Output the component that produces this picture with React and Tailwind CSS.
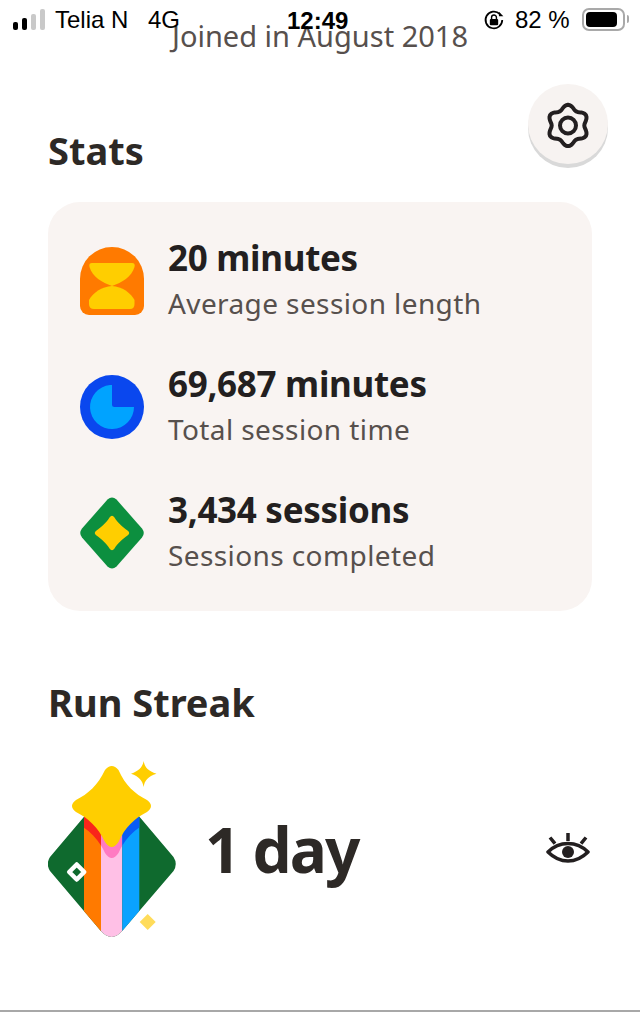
const FONT = "font-['Noto_Sans',sans-serif]";

// six lobed outline used by the settings button
function gearPath(cx, cy) {
  const pts = [];
  for (let i = 0; i < 72; i++) {
    const a = (i / 72) * Math.PI * 2;
    const r = 18.5 + 2.2 * Math.cos(6 * (a + Math.PI / 2));
    pts.push(`${(cx + r * Math.cos(a)).toFixed(2)} ${(cy + r * Math.sin(a)).toFixed(2)}`);
  }
  return `M${pts.join("L")}Z`;
}

function StatusBar() {
  return (
    <div className="absolute top-0 left-0 right-0 h-[40px] font-['Liberation_Sans',sans-serif] text-[24px] leading-[28px] text-black">
      <div className="flex items-end gap-[4px] absolute left-[13px] top-[9px] h-[21px]">
        <div className="w-[5px] h-[8px] rounded-[2px] bg-black" />
        <div className="w-[5px] h-[12px] rounded-[2px] bg-black" />
        <div className="w-[5px] h-[16px] rounded-[2px] bg-[#c9c9c9]" />
        <div className="w-[5px] h-[21px] rounded-[2px] bg-[#c9c9c9]" />
      </div>
      <span className="absolute left-[55px] top-[6px]">Telia N</span>
      <span className="absolute left-[148px] top-[6px]">4G</span>
      <span className="absolute left-[287px] top-[7px] text-[24px] font-bold">12:49</span>
      <svg className="absolute left-[483px] top-[9px]" width="22" height="22" viewBox="0 0 20 20">
        <path d="M17.5 10a7.6 7.6 0 1 1-2.2-5.4" fill="none" stroke="#000" strokeWidth="1.6" />
        <path d="M14.5 2.500v4h4z" fill="#000" />
        <rect x="6.200" y="9" width="7.600" height="5.800" rx="1" fill="#000" />
        <path d="M7.800 9V7.600a2.200 2.200 0 0 1 4.400 0V9" fill="none" stroke="#000" strokeWidth="1.300" />
      </svg>
      <span className="absolute left-[515px] top-[6px]">82 %</span>
      <div className="absolute left-[582px] top-[8px] w-[43px] h-[23px] rounded-[7px] border-2 border-[#a9a9a9] p-[2px]">
        <div className="w-[31px] h-full rounded-[4px] bg-black" />
      </div>
      <div className="absolute left-[627px] top-[15px] w-[2px] h-[8px] rounded-r-full bg-[#a9a9a9]" />
    </div>
  );
}

function HourglassIcon() {
  return (
    <svg width="64" height="68" viewBox="0 0 64 68" className="shrink-0">
      <path d="M0 32a32 32 0 0 1 64 0v27a9 9 0 0 1-9 9H9a9 9 0 0 1-9-9z" fill="#ff7a00" />
      <path d="M12 16H52Q55.500 16 54.500 20C51.500 30 42 35.500 32 39C22 35.500 12.500 30 9.500 20Q8.500 16 12 16Z" fill="#ffce00" />
      <path d="M32 39C42 39.500 51 46 54.500 53V57Q54.500 62 50 62H14Q9 62 9 57V53C12.500 46 22 39.500 32 39Z" fill="#ffce00" />
    </svg>
  );
}

function PieIcon() {
  return (
    <svg width="64" height="64" viewBox="0 0 64 64" className="shrink-0">
      <circle cx="32" cy="32" r="32" fill="#0a47ee" />
      <path d="M32 10V29.500Q32 32 34.500 32H54A22 22 0 1 1 30 10.100Z" fill="#00a3ff" />
    </svg>
  );
}

function DiamondIcon() {
  return (
    <svg width="64" height="72" viewBox="0 0 64 72" className="shrink-0">
      <path d="M27.500 2.500Q32-1.500 36.500 2.500L62 31.500Q65.500 36 62 40.500L36.500 69.500Q32 73.500 27.500 69.500L2 40.500Q-1.500 36 2 31.500Z" fill="#0c8f3f" />
      <path d="M29.500 20.500Q32 17 34.500 20.500C37 25 43 30.500 47.500 33.500Q51 36 47.500 38.500C43 41.500 37 47 34.500 51.500Q32 55 29.500 51.500C27 47 21 41.500 16.500 38.500Q13 36 16.500 33.500C21 30.500 27 25 29.500 20.500Z" fill="#ffce00" />
    </svg>
  );
}

const STAR =
  "M58 9Q64.700 1 71.500 9C78 24 88 33 100 39Q108 45 100 51C88 57 78 66 71.500 81Q64.700 91 58 81C51 66 41 57 29 51Q21 45 29 39C41 33 51 24 58 9Z";

function StreakBadge() {
  return (
    <svg width="130" height="182" viewBox="1 0 130 182" className="shrink-0">
      <defs>
        <clipPath id="badgeBody">
          <path d="M58 31Q64.700 23 71.500 31L126.500 96Q131 103 126.500 110L76 169Q64.700 183 53 169L3 110Q-1.500 103 3 96Z" />
        </clipPath>
        <clipPath id="stripeOrange"><rect x="37" y="0" width="17" height="182" /></clipPath>
        <clipPath id="stripePink"><rect x="54" y="0" width="21.300" height="182" /></clipPath>
        <clipPath id="stripeBlue"><rect x="75.300" y="0" width="17" height="182" /></clipPath>
      </defs>
      <g clipPath="url(#badgeBody)">
        <rect width="132" height="182" fill="#0f6a2e" />
        <rect x="37" width="17" height="182" fill="#ff7a00" />
        <rect x="54" width="21.300" height="182" fill="#ffc0e6" />
        <rect x="75.300" width="17" height="182" fill="#0aa2ff" />
        <g transform="translate(0 11)">
          <g clipPath="url(#stripeOrange)"><path d={STAR} fill="#f9251a" /></g>
          <g clipPath="url(#stripePink)"><path d={STAR} fill="#ff7ac2" /></g>
          <g clipPath="url(#stripeBlue)"><path d={STAR} fill="#0a5cf5" /></g>
        </g>
      </g>
      <path d={STAR} fill="#ffce00" />
      <path d="M96.700 0C97.500 6 101 10 109.500 12.700C101 15.500 97.500 19.500 96.700 26C95.500 19.500 92 15.500 84 12.700C92 10 95.500 6 96.700 0Z" fill="#ffce00" />
      <path d="M100.700 153L108.700 161L100.700 169L92.700 161Z" fill="#ffdc5a" strokeLinejoin="round" />
      <path d="M29.700 103.500L37.200 111L29.700 118.500L22.200 111Z" fill="#0f6a2e" stroke="#fff" strokeWidth="4.500" strokeLinejoin="round" />
    </svg>
  );
}

function EyeIcon() {
  return (
    <svg width="44" height="40" viewBox="0 0 44 40" className="shrink-0">
      <path d="M2 20C8 14 14 11.500 22 11.500S36 14 42 20C36 26 30 29 22 29S8 26 2 20Z" fill="none" stroke="#231f20" strokeWidth="3.500" strokeLinejoin="round" />
      <circle cx="22" cy="20" r="6" fill="#231f20" />
      <path d="M22 1V9M4 5.500L9 11.700M40 5.500L35 11.700" stroke="#231f20" strokeWidth="3.500" fill="none" />
    </svg>
  );
}

function StatRow({ icon, title, sub }) {
  return (
    <div className="flex items-center gap-6 h-[84px]">
      <div className="w-16 flex justify-center">{icon}</div>
      <div className="flex flex-col">
        <span className="text-[35px] leading-[44px] font-bold tracking-[-0.3px] text-[#231f20]">{title}</span>
        <span className="text-[28px] leading-[46px] tracking-[0.4px] text-[#57504d]">{sub}</span>
      </div>
    </div>
  );
}

export default function App() {
  return (
    <div className={`relative w-[640px] h-[1012px] bg-white overflow-hidden flex flex-col ${FONT}`}>
      <StatusBar />
      <p className="mt-[18px] text-center text-[29px] leading-[36px] text-[#57504d]">Joined in August 2018</p>

      <button className="absolute left-[528px] top-[84px] w-20 h-20 rounded-full bg-[#f7f3f1] shadow-[0_4px_0_#d9d9d9] flex items-center justify-center">
        <svg width="48" height="48" viewBox="0 0 48 48">
          <path d={gearPath(24, 25.5)} fill="none" stroke="#231f20" strokeWidth="4" strokeLinejoin="round" />
          <circle cx="24" cy="25.500" r="8" fill="none" stroke="#231f20" strokeWidth="4" />
        </svg>
      </button>

      <div className="mt-[70px] px-12">
        <h2 className="text-[38px] leading-[52px] font-bold text-[#2d2926]">Stats</h2>
        <div className="mt-[26px] h-[409px] rounded-[32px] bg-[#f9f4f2] px-8 flex flex-col justify-center gap-[42px]">
          <StatRow icon={<HourglassIcon />} title="20 minutes" sub="Average session length" />
          <StatRow icon={<PieIcon />} title="69,687 minutes" sub="Total session time" />
          <StatRow icon={<DiamondIcon />} title="3,434 sessions" sub="Sessions completed" />
        </div>
      </div>

      <div className="mt-[65px] px-12">
        <h2 className="text-[38px] leading-[52px] font-bold text-[#2d2926]">Run Streak</h2>
        <div className="mt-[33px] flex items-center">
          <StreakBadge />
          <span className="ml-[27px] -mt-[6px] text-[62px] leading-[90px] font-bold tracking-[-2px] text-[#2d2926]">1 day</span>
          <div className="ml-auto mr-[2px]"><EyeIcon /></div>
        </div>
      </div>

      <div className="mt-auto h-[2px] bg-[#a8a8a8]" />
    </div>
  );
}
